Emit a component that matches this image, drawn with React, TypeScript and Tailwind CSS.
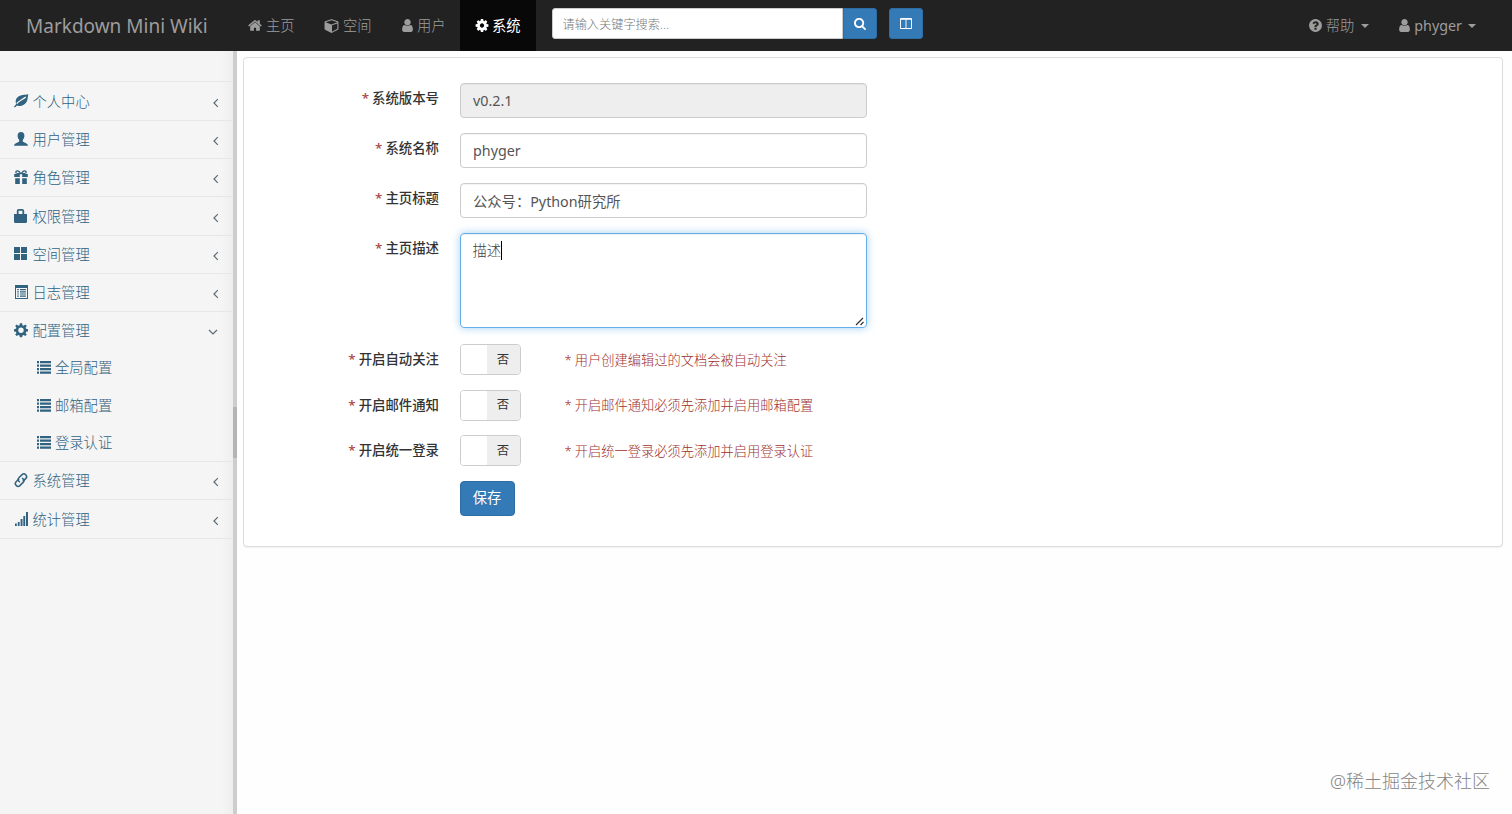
import React, { useState } from "react";

const FONT =
  "font-['Noto_Sans','Noto_Sans_CJK_SC',sans-serif]";

interface FaProps {
  w: number;
  d: string;
  className?: string;
}

function Fa({ w, d, className }: FaProps) {
  return (
    <svg viewBox={`0 0 ${w} 1792`} fill="currentColor" className={className}>
      <path d={d} />
    </svg>
  );
}

const fa = {
  home: "M1408 992v480q0 26-19 45t-45 19h-384v-384h-256v384h-384q-26 0-45-19t-19-45v-480q0-1 .5-3t.5-3l575-474 575 474q1 2 1 6zm223-69l-62 74q-8 9-21 11h-3q-13 0-21-7l-692-577-692 577q-12 8-24 7-13-2-21-11l-62-74q-8-10-7-23.5t11-21.5l719-599q32-26 76-26t76 26l244 204v-195q0-14 9-23t23-9h192q14 0 23 9t9 23v408l219 182q10 8 11 21.5t-7 23.5z",
  cube: "M896 1629l640-349v-636l-640 233v752zm-64-865l698-254-698-254-698 254zm832-252v768q0 35-18 65t-49 47l-704 384q-28 16-61 16t-61-16l-704-384q-31-17-49-47t-18-65v-768q0-40 23-73t61-47l704-256q22-8 44-8t44 8l704 256q38 14 61 47t23 73z",
  user: "M1280 1399q0 109-62.5 187t-150.5 78h-854q-88 0-150.5-78t-62.5-187q0-85 8.5-160.5t31.5-152 58.5-131 94-89 134.5-34.5q131 128 313 128t313-128q76 0 134.5 34.5t94 89 58.5 131 31.5 152 8.5 160.5zm-256-887q0 159-112.5 271.5t-271.5 112.5-271.5-112.5-112.5-271.5 112.5-271.5 271.5-112.5 271.5 112.5 112.5 271.5z",
  cog: "M1024 896q0-106-75-181t-181-75-181 75-75 181 75 181 181 75 181-75 75-181zm512-109v222q0 12-8 23t-20 13l-185 28q-19 54-39 91 35 50 107 138 10 12 10 25t-9 23q-27 37-99 108t-94 71q-12 0-26-9l-138-108q-44 23-91 38-16 136-29 186-7 28-36 28h-222q-14 0-24.5-8.5t-11.5-21.5l-28-184q-49-16-90-37l-141 107q-10 9-25 9-14 0-25-11-126-114-165-168-7-10-7-23 0-12 8-23 15-21 51-66.5t54-70.5q-27-50-41-99l-183-27q-13-2-21-12.5t-8-23.5v-222q0-12 8-23t19-13l186-28q14-46 39-92-40-57-107-138-10-12-10-24 0-10 9-23 26-36 98.5-107.5t94.5-71.5q13 0 26 10l138 107q44-23 91-38 16-136 29-186 7-28 36-28h222q14 0 24.5 8.5t11.5 21.5l28 184q49 16 90 37l142-107q9-9 24-9 13 0 25 10 129 119 165 170 7 8 7 22 0 12-8 23-15 21-51 66.5t-54 70.5q26 50 41 98l183 28q13 2 21 12.5t8 23.5z",
  search:
    "M1152 832q0-185-131.5-316.5t-316.5-131.5-316.5 131.5-131.5 316.5 131.5 316.5 316.5 131.5 316.5-131.5 131.5-316.5zm512 832q0 52-38 90t-90 38q-54 0-90-38l-343-342q-179 124-399 124-143 0-273.5-55.5t-225-150-150-225-55.5-273.5 55.5-273.5 150-225 225-150 273.5-55.5 273.5 55.5 225 150 150 225 55.5 273.5q0 220-124 399l343 343q37 37 37 90z",
  columns:
    "M160 1536h608v-1152h-640v1120q0 13 9.5 22.5t22.5 9.5zm1376-32v-1120h-640v1152h608q13 0 22.5-9.5t9.5-22.5zm128-1216v1216q0 66-47 113t-113 47h-1344q-66 0-113-47t-47-113v-1216q0-66 47-113t113-47h1344q66 0 113 47t47 113z",
  question:
    "M896 1376v-192q0-14-9-23t-23-9h-192q-14 0-23 9t-9 23v192q0 14 9 23t23 9h192q14 0 23-9t9-23zm256-672q0-88-55.500-163t-138.500-116-170-41q-243 0-371 213-15 24 8 42l132 100q7 6 19 6 16 0 25-12 53-68 86-92 34-24 86-24 48 0 85.500 26t37.500 59q0 38-20 61t-68 45q-63 28-115.500 86.500t-52.500 125.500v36q0 14 9 23t23 9h192q14 0 23-9t9-23q0-19 21.500-49.500t54.500-49.500q32-18 49-28.500t46-35 44.500-48 28-60.500 12.500-81zm384 192q0 209-103 385.500t-279.500 279.500-385.500 103-385.500-103-279.500-279.500-103-385.500 103-385.500 279.500-279.500 385.500-103 385.500 103 279.500 279.500 103 385.500z",
};

// Sidebar glyphs, all on a 14x14 grid
const glyphs: Record<string, React.ReactNode> = {
  leaf: (
    <>
      <path
        fill="currentColor"
        d="M14.300 0C12.700.8 11 .7 8.800 1 5 1.600 1.700 3.700 1.700 7.600c0 .9.100 1.700.5 2.500L0 12.700l.9.700 2.200-2c3.200 1.200 6.900.2 8.900-2.600C14 6 13.600 3 14.300 0z"
      />
      <path d="M2.700 9.600C4.900 6.500 7.800 6.300 11.800 3.100" fill="none" stroke="#f5f5f5" strokeWidth="1.300" />
    </>
  ),
  user: (
    <path
      fill="currentColor"
      d="M7 0C4.800 0 3.500 1.600 3.600 3.800c0 1.700.7 3.300 1.600 4.100v1.200c0 .6-.3.800-.8 1L1.500 11.400C.5 11.900.1 12.500.1 13.700h13.800c0-1.200-.4-1.800-1.400-2.300L9.600 10.100c-.5-.2-.8-.4-.8-1V7.900c.9-.8 1.600-2.400 1.600-4.100C10.500 1.600 9.200 0 7 0z"
    />
  ),
  gift: (
    <>
      <path fill="currentColor" d="M.2 4h5.600v3H.2zM8.200 4h5.600v3H8.200zM1.200 8.200h4.600V14H1.200zM8.200 8.200h4.600V14H8.200z" />
      <path
        d="M6.600 4C6 2 4.600.8 3.100.9 1.600 1 1.500 2.700 2.600 3.500M7.400 4C8 2 9.400.8 10.900.9c1.500.1 1.600 1.800.5 2.600M3 3.700h8"
        fill="none"
        stroke="currentColor"
        strokeWidth="1.300"
      />
    </>
  ),
  lock: (
    <>
      <path fill="currentColor" d="M0 5h13v7.800c0 .7-.4 1.200-1.100 1.200H1.100C.4 14 0 13.500 0 12.800z" />
      <path d="M3.700 6V2.200c0-.8.500-1.400 1.300-1.400h3c.8 0 1.300.6 1.300 1.400V6" fill="none" stroke="currentColor" strokeWidth="1.800" />
    </>
  ),
  grid: (
    <path fill="currentColor" d="M0 0h6v6H0zM7 0h6v6H7zM0 7h6v6H0zM7 7h6v6H7z" />
  ),
  log: (
    <path
      fill="currentColor"
      fillRule="evenodd"
      d="M1 0h13v14H1zM2 3v10h11V3zM3.200 4h1.600v1.200H3.200zM3.200 6.200h1.600v1.200H3.200zM3.200 8.400h1.600v1.200H3.200zM3.200 10.600h1.600v1.200H3.200zM6 4h5.900v1.200H6zM6 6.200h5.900v1.200H6zM6 8.400h5.900v1.200H6zM6 10.600h5.900v1.200H6z"
    />
  ),
  cog: (
    <path
      fill="currentColor"
      fillRule="evenodd"
      d="M5.900.2h2.200l.4 2 1.100.5 1.700-1.200 1.500 1.500-1.200 1.700.5 1.100 1.900.4v2.200l-1.900.4-.5 1.100 1.200 1.700-1.500 1.500-1.700-1.200-1.100.5-.4 1.900H5.900l-.4-1.900-1.100-.5-1.700 1.200-1.500-1.500 1.200-1.700-.5-1.100L0 8.400V6.200l1.900-.4.5-1.100L1.200 3l1.500-1.500 1.700 1.200 1.100-.5zM7 4.600a2.700 2.700 0 1 0 0 5.400 2.700 2.700 0 0 0 0-5.400z"
    />
  ),
  list: (
    <path
      fill="currentColor"
      d="M0 1h2v2.300H0zM0 4.500h2v2.300H0zM0 8h2v2.300H0zM0 11.500h2v2.300H0zM3 1h11v2.300H3zM3 4.500h11v2.300H3zM3 8h11v2.300H3zM3 11.500h11v2.300H3z"
    />
  ),
  link: (
    <g fill="none" stroke="currentColor" strokeWidth="1.500">
      <path d="M8.900 8.400l3-3a2.500 2.500 0 0 0 0-3.500l-.3-.3a2.500 2.500 0 0 0-3.500 0L4.900 4.800a2.500 2.500 0 0 0 0 3.500l1 .9" />
      <path d="M5.100 5.800l-3 3a2.500 2.500 0 0 0 0 3.500l.3.300a2.500 2.500 0 0 0 3.500 0l3.200-3.200a2.500 2.500 0 0 0 0-3.500l-1-.9" />
    </g>
  ),
  stats: (
    <path fill="currentColor" d="M1 11.500h1.800V14H1zM3.800 10h1.800v4H3.800zM6.600 7h1.900v7H6.600zM9.300 4h1.900v10H9.300zM12 0h2v14h-2z" />
  ),
};

function Glyph({ name }: { name: string }) {
  return (
    <svg viewBox="0 0 14 14" className="mb-[2px] w-3.5 h-3.5 shrink-0 overflow-visible">
      {glyphs[name]}
    </svg>
  );
}

const menu = [
  { icon: "leaf", label: "个人中心", height: "h-[39px]" },
  { icon: "user", label: "用户管理", height: "h-[38px]" },
  { icon: "gift", label: "角色管理", height: "h-[38px]" },
  { icon: "lock", label: "权限管理", height: "h-[39px]" },
  { icon: "grid", label: "空间管理", height: "h-[38px]" },
  { icon: "log", label: "日志管理", height: "h-[38px]" },
  {
    icon: "cog",
    label: "配置管理",
    height: "h-[38px]",
    children: ["全局配置", "邮箱配置", "登录认证"],
  },
  { icon: "link", label: "系统管理", height: "h-[38px]" },
  { icon: "stats", label: "统计管理", height: "h-[39px]" },
];

const toggles = [
  { label: "开启自动关注", tip: "用户创建编辑过的文档会被自动关注" },
  { label: "开启邮件通知", tip: "开启邮件通知必须先添加并启用邮箱配置" },
  { label: "开启统一登录", tip: "开启统一登录必须先添加并启用登录认证" },
];

function Caret() {
  return <span className="border-x-4 border-t-4 border-x-transparent border-t-current" />;
}

function Navbar() {
  return (
    <nav className="flex h-[51px] shrink-0 bg-[#222] text-[#9d9d9d] text-[14.3px]">
      <div className="w-[234px] pl-[26px] pt-[2px] flex items-center text-[19px] whitespace-nowrap">
        Markdown Mini Wiki
      </div>
      <a className="flex w-[76px] items-center gap-[4px] pl-[14px] font-light">
        <Fa w={1664} d={fa.home} className="w-[14px] h-[15px]" />
        主页
      </a>
      <a className="flex w-[76px] items-center gap-[4px] pl-[14px] font-light">
        <Fa w={1664} d={fa.cube} className="w-[15px] h-[15px]" />
        空间
      </a>
      <a className="flex w-[74px] items-center gap-[4px] pl-[16px] font-light">
        <Fa w={1280} d={fa.user} className="w-[11px] h-[15px]" />
        用户
      </a>
      <a className="flex w-[76px] items-center gap-[3px] pl-[15px] bg-[#080808] text-white">
        <Fa w={1536} d={fa.cog} className="w-[14px] h-[15px]" />
        系统
      </a>
      <div className="ml-[15.500px] mt-[8px] flex h-[31px]">
        <input
          placeholder="请输入关键字搜索..."
          className="w-[291px] h-full rounded-l-[3px] bg-white border border-[#ccc] px-2.5 pt-[2px] text-[12.200px] font-light text-[#555] placeholder:text-[#777] outline-none"
        />
        <button className="w-[34px] h-full rounded-r-[3px] bg-[#337ab7] border border-[#2e6da4] flex items-center justify-center text-white">
          <Fa w={1664} d={fa.search} className="w-[12px] h-[13px]" />
        </button>
        <button className="ml-[12px] w-[34px] h-full rounded-[3px] bg-[#337ab7] border border-[#2e6da4] flex items-center justify-center text-white">
          <Fa w={1664} d={fa.columns} className="w-[12px] h-[13px]" />
        </button>
      </div>
      <div className="ml-auto flex items-center pr-[36px]">
        <a className="flex items-center gap-[4px] font-light">
          <Fa w={1536} d={fa.question} className="w-[13px] h-[15px]" />
          帮助
          <span className="ml-[3px] flex">
            <Caret />
          </span>
        </a>
        <a className="ml-[30px] flex items-center gap-[4px]">
          <Fa w={1280} d={fa.user} className="w-[11px] h-[15px]" />
          phyger
          <span className="ml-[2px] flex">
            <Caret />
          </span>
        </a>
      </div>
    </nav>
  );
}

function Sidebar() {
  const [open, setOpen] = useState("配置管理");

  return (
    <aside className="flex w-[237px] shrink-0 bg-[#f5f5f5]">
      <div className="w-[233px] pt-[30px] text-[14.3px] font-light text-[#31627f] bg-linear-to-r from-[#f5f5f5] from-95% to-[#eeeeee]">
        <ul className="border-t border-[#e7e7e7]">
          {menu.map((item) => {
            const expanded = item.children && open === item.label;
            return (
              <li key={item.label} className="border-b border-[#e7e7e7]">
                <div
                  onClick={() => setOpen(expanded ? "" : item.label)}
                  className={`${item.height} -mb-px flex items-center pl-[14px] pr-[14px] cursor-pointer`}
                >
                  <Glyph name={item.icon} />
                  <span className="ml-[4.500px]">{item.label}</span>
                  <svg
                    viewBox="0 0 10 10"
                    className={`ml-auto mt-[2px] w-[10px] h-[10px] ${expanded ? "mr-[1px]" : "mr-[-2px]"}`}
                    fill="none"
                    stroke="#5a6a74"
                    strokeWidth="1.200"
                  >
                    <path d={expanded ? "M1 3l4 4 4-4" : "M6.800 1.200L3 5l3.800 3.800"} />
                  </svg>
                </div>
                {expanded && (
                  <ul>
                    {item.children.map((child) => (
                      <li key={child} className="flex h-[37.400px] items-center pt-[1px] pl-[37px]">
                        <Glyph name="list" />
                        <span className="ml-1">{child}</span>
                      </li>
                    ))}
                  </ul>
                )}
              </li>
            );
          })}
        </ul>
      </div>
      {/* scrollbar */}
      <div className="w-1 bg-[#cdcdcd] pt-[356px]">
        <div className="h-[51px] bg-[#b4b4b4]" />
      </div>
    </aside>
  );
}

function Label({ children }: { children: React.ReactNode }) {
  return (
    <label className="w-[195px] shrink-0 mr-[20.500px] pt-[6px] text-right text-[13.400px] leading-[19px] font-medium text-[#333]">
      <span className="mr-[3px] text-[#a94442]">*</span>
      {children}
    </label>
  );
}

function Field({ label, value, disabled }: { label: string; value: string; disabled?: boolean }) {
  return (
    <div className="flex mb-[15px]">
      <Label>{label}</Label>
      <input
        defaultValue={value}
        disabled={disabled}
        className="w-[407px] h-[35px] rounded-[4px] border border-[#ccc] bg-white px-[12.500px] pb-[1px] text-[14.3px] text-[#555] shadow-[inset_0_1px_1px_rgba(0,0,0,0.05)] outline-none disabled:bg-[#eee]"
      />
    </div>
  );
}

export default function App() {
  return (
    <div className={`${FONT} relative flex h-[814px] w-[1512px] flex-col overflow-hidden bg-[#fefefe]`}>
      <Navbar />
      <div className="flex flex-1">
        <Sidebar />
        <main className="flex-1 pl-[6px] pr-[9px] pt-[6px]">
          <form className="h-[490px] rounded-[4px] border border-[#ddd] bg-white pt-[25px] shadow-[0_1px_1px_rgba(0,0,0,0.05)]">
            <Field label="系统版本号" value="v0.2.1" disabled />
            <Field label="系统名称" value="phyger" />
            <Field label="主页标题" value="公众号：Python研究所" />
            <div className="flex mb-[16px]">
              <Label>主页描述</Label>
              <div className="relative w-[407px] h-[95px] rounded-[4px] border border-[#66afe9] px-[12px] py-[7px] text-[14.3px] leading-[20px] text-[#444] shadow-[inset_0_1px_1px_rgba(0,0,0,0.075),0_0_8px_rgba(102,175,233,0.6)]">
                <span className="inline-block h-[19px] border-r border-black font-light">描述</span>
                <svg viewBox="0 0 10 10" className="absolute right-[1px] bottom-[1px] w-[10px] h-[10px]" stroke="#333" strokeWidth="1.200" fill="none">
                  <path d="M1 9l7-7M5.500 9l3-3" />
                </svg>
              </div>
            </div>
            {toggles.map((t) => (
              <div key={t.label} className="flex h-[31px] mb-[14.500px]">
                <Label>{t.label}</Label>
                <div className="flex w-[61px] h-[31px] overflow-hidden rounded-[4px] border border-[#ccc] text-[12.400px] text-[#333]">
                  <span className="w-[26px] bg-white" />
                  <span className="flex-1 bg-[#eee] flex items-center justify-center pt-[1px]">否</span>
                </div>
                <span className="ml-[44px] pt-[5.500px] text-[13.250px] leading-[20px] font-light text-[#a0302e]">
                  <span className="mr-[3px]">*</span>
                  {t.tip}
                </span>
              </div>
            ))}
            <button
              type="button"
              className="ml-[215.500px] w-[55px] h-[35px] rounded-[4px] border border-[#2e6da4] bg-[#337ab7] text-[14.3px] text-white"
            >
              保存
            </button>
          </form>
        </main>
      </div>
      <div className="absolute right-[22px] bottom-[20px] text-[18px] leading-[26px] font-light text-[#858585]">
        @稀土掘金技术社区
      </div>
    </div>
  );
}
